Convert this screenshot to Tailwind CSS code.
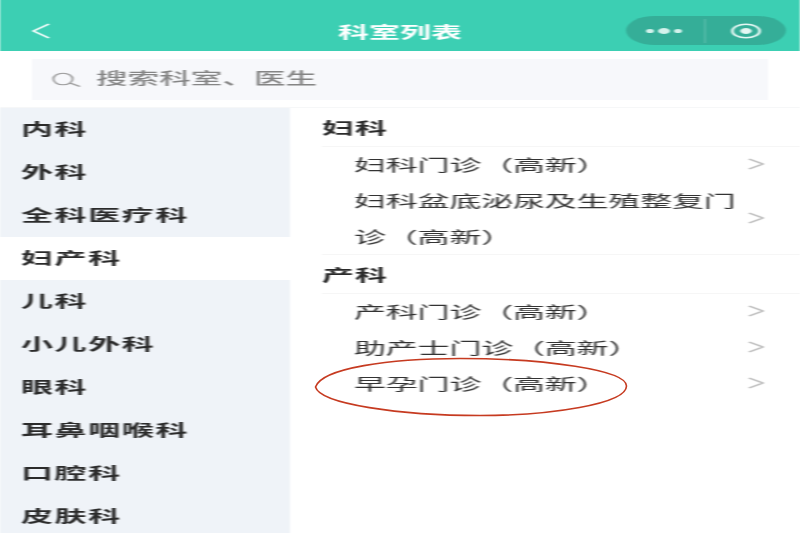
<!DOCTYPE html>
<html lang="zh-CN">
<head>
    <meta charset="UTF-8">
    <meta name="viewport" content="width=device-width, initial-scale=1.0">
    <title>科室列表</title>
    <script src="https://cdn.jsdelivr.net/npm/@tailwindcss/browser@4"></script>
</head>
<body class="bg-white overflow-hidden font-['Noto_Sans_CJK_SC','Noto_Sans',sans-serif]">
    <div class="relative w-[800px] h-[533px] overflow-hidden">
        <!-- the screenshot is a phone page stretched to double width, so lay out at 400px and scale -->
        <div class="w-[400px] h-[533px] flex flex-col origin-top-left scale-x-[2] blur-[0.4px]">
            <header class="h-[51px] shrink-0 bg-[#3ccfb3] flex items-center justify-between pl-4 pr-[7px] pt-[10px] relative">
                <svg class="w-[9px] h-4" viewBox="0 0 9 16" fill="none" stroke="#fff" stroke-width="1.2"><path d="M8.5 1 L0.7 8 L8.5 15"/></svg>
                <h1 class="absolute inset-x-0 text-center text-[15.5px] leading-[26px] font-bold text-white">科室列表</h1>
                <div class="w-[80.5px] h-[29px] rounded-full bg-[#35ae98] flex items-center">
                    <div class="w-1/2 h-[24px] flex items-center justify-center gap-[2px] border-r border-white/15">
                        <span class="w-[4px] h-[4px] rounded-full bg-[#d4f2ec]"></span>
                        <span class="w-[6px] h-[6px] rounded-full bg-[#d4f2ec]"></span>
                        <span class="w-[4px] h-[4px] rounded-full bg-[#d4f2ec]"></span>
                    </div>
                    <div class="w-1/2 flex items-center justify-center">
                        <svg class="w-[16px] h-[16px]" viewBox="0 0 16 16"><circle cx="8" cy="8" r="6.8" fill="none" stroke="#e4f7f3" stroke-width="1.4"/><circle cx="8" cy="8" r="2.9" fill="#e4f7f3"/></svg>
                    </div>
                </div>
            </header>

            <div class="h-[57px] shrink-0 px-4 pt-2 border-b border-[#f6f7f8]">
                <div class="h-[41px] bg-[#f7f8fb] flex items-center pl-[10px] gap-[7.5px] text-[#858585]">
                    <svg class="w-[14.5px] h-[15px]" viewBox="0 0 14.5 15" fill="none" stroke="#999" stroke-width="1"><ellipse cx="5.5" cy="7" rx="4.8" ry="5.8"/><path d="M9 11 L14 14.5"/></svg>
                    <span class="text-[15.8px] leading-[24px] font-medium pb-[4px]">搜索科室、医生</span>
                </div>
            </div>

            <main class="flex-1 flex min-h-0">
                <nav class="w-[145px] shrink-0 bg-[#eff3f8] text-[16px] font-bold tracking-[0.8px] text-[#2b2b2b]">
                    <div class="h-[43px] pl-[10.5px] pb-[4px] flex items-center">内科</div>
                    <div class="h-[43px] pl-[10.5px] pb-[4px] flex items-center">外科</div>
                    <div class="h-[43px] pl-[10.5px] pb-[4px] flex items-center">全科医疗科</div>
                    <div class="h-[43px] pl-[10.5px] pb-[4px] flex items-center bg-white">妇产科</div>
                    <div class="h-[43px] pl-[10.5px] pb-[4px] flex items-center">儿科</div>
                    <div class="h-[43px] pl-[10.5px] pb-[4px] flex items-center">小儿外科</div>
                    <div class="h-[43px] pl-[10.5px] pb-[4px] flex items-center">眼科</div>
                    <div class="h-[43px] pl-[10.5px] pb-[4px] flex items-center">耳鼻咽喉科</div>
                    <div class="h-[43px] pl-[10.5px] pb-[4px] flex items-center">口腔科</div>
                    <div class="h-[43px] pl-[10.5px] pb-[4px] flex items-center">皮肤科</div>
                </nav>

                <section class="flex-1 pl-4 text-[16px] text-[#333] tracking-[-0.1px]">
                    <h2 class="h-[39px] flex items-center font-bold tracking-[0.5px] text-[#2b2b2b] border-b border-[#f6f6f6]">妇科</h2>
                    <div class="h-[36px] pl-4 pr-[18px] pb-[2px] flex items-center justify-between">
                        <span>妇科门诊（高新）</span>
                        <svg class="w-[8px] h-[12px] shrink-0" viewBox="0 0 8 12" fill="none" stroke="#bdbdbd" stroke-width="1.4"><path d="M0.5 1 L7.5 6 L0.5 11"/></svg>
                    </div>
                    <div class="h-[72px] pl-4 pr-[18px] pb-[2px] flex items-center justify-between border-b border-[#f6f6f6]">
                        <span class="w-[193px] leading-[36px]">妇科盆底泌尿及生殖整复门诊（高新）</span>
                        <svg class="w-[8px] h-[12px] shrink-0" viewBox="0 0 8 12" fill="none" stroke="#bdbdbd" stroke-width="1.4"><path d="M0.5 1 L7.5 6 L0.5 11"/></svg>
                    </div>
                    <h2 class="h-[39px] flex items-center font-bold tracking-[0.5px] text-[#2b2b2b] border-b border-[#f6f6f6]">产科</h2>
                    <div class="h-[36px] pl-4 pr-[18px] pb-[2px] flex items-center justify-between">
                        <span>产科门诊（高新）</span>
                        <svg class="w-[8px] h-[12px] shrink-0" viewBox="0 0 8 12" fill="none" stroke="#bdbdbd" stroke-width="1.4"><path d="M0.5 1 L7.5 6 L0.5 11"/></svg>
                    </div>
                    <div class="h-[36px] pl-4 pr-[18px] pb-[2px] flex items-center justify-between">
                        <span>助产士门诊（高新）</span>
                        <svg class="w-[8px] h-[12px] shrink-0" viewBox="0 0 8 12" fill="none" stroke="#bdbdbd" stroke-width="1.4"><path d="M0.5 1 L7.5 6 L0.5 11"/></svg>
                    </div>
                    <div class="h-[36px] pl-4 pr-[18px] pb-[2px] flex items-center justify-between">
                        <span>早孕门诊（高新）</span>
                        <svg class="w-[8px] h-[12px] shrink-0" viewBox="0 0 8 12" fill="none" stroke="#bdbdbd" stroke-width="1.4"><path d="M0.5 1 L7.5 6 L0.5 11"/></svg>
                    </div>
                </section>
            </main>
        </div>

        <!-- hand drawn annotation around the last row -->
        <svg class="absolute left-[310px] top-[354px] w-[322px] h-[66px]" viewBox="0 0 322 66" fill="none" stroke="#c63a20" stroke-width="1.6">
            <path d="M5.5 33 C12 14 80 4.5 150 4.5 C235 4.5 316.5 16 316.5 32 C316.5 50 240 61.5 170 61.5 C90 61.5 10 50 5.5 33 Z"/>
        </svg>
    </div>
</body>
</html>
